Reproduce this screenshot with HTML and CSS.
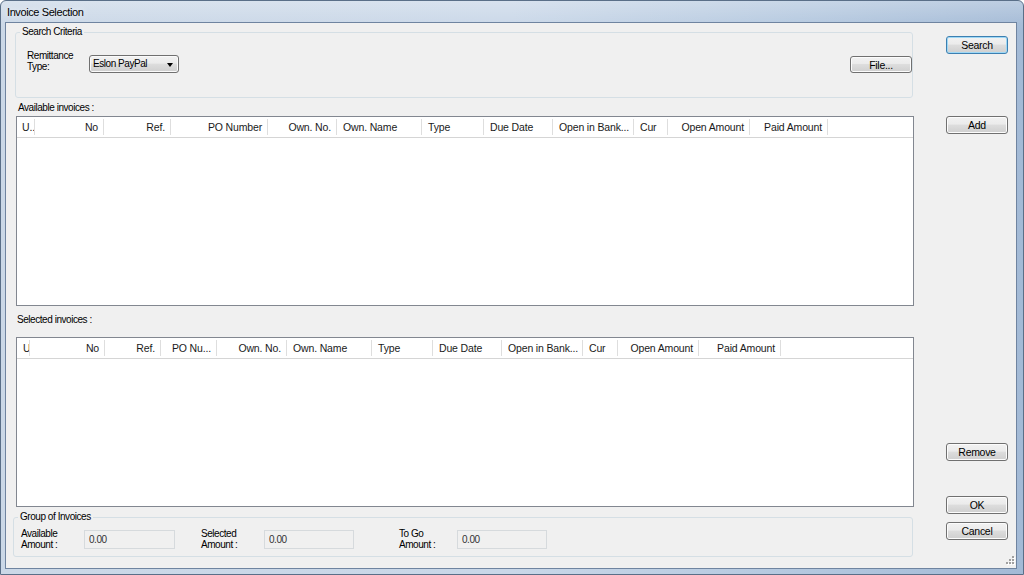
FILE: index.html
```html
<!DOCTYPE html>
<html>
<head>
<meta charset="utf-8">
<title>Invoice Selection</title>
<link rel="stylesheet" href="styles.css">
</head>
<body>
<div class="window">
  <div class="titlebar"><span class="title">Invoice Selection</span></div>
  <div class="client">
    <div class="main">
      <fieldset class="group group-search">
        <legend>Search Criteria</legend>
        <div class="search-row">
          <div class="lbl2">Remittance<br>Type:</div>
          <div class="combo"><span class="combo-text">Eslon PayPal</span><span class="arrow"></span></div>
          <button class="btn btn-file">File...</button>
        </div>
      </fieldset>

      <div class="caption cap-avail">Available invoices :</div>
      <div class="list list-avail">
        <div class="hdr hdr-avail">
          <div class="hc">U..</div>
          <div class="hc r">No</div>
          <div class="hc r">Ref.</div>
          <div class="hc r">PO Number</div>
          <div class="hc r">Own. No.</div>
          <div class="hc">Own. Name</div>
          <div class="hc">Type</div>
          <div class="hc">Due Date</div>
          <div class="hc">Open in Bank...</div>
          <div class="hc">Cur</div>
          <div class="hc r">Open Amount</div>
          <div class="hc r">Paid Amount</div>
          <div class="hc fill"></div>
        </div>
      </div>

      <div class="caption cap-sel">Selected invoices :</div>
      <div class="list list-sel">
        <div class="hdr hdr-sel">
          <div class="hc">U</div>
          <div class="hc r">No</div>
          <div class="hc r">Ref.</div>
          <div class="hc r">PO Nu...</div>
          <div class="hc r">Own. No.</div>
          <div class="hc">Own. Name</div>
          <div class="hc">Type</div>
          <div class="hc">Due Date</div>
          <div class="hc">Open in Bank...</div>
          <div class="hc">Cur</div>
          <div class="hc r">Open Amount</div>
          <div class="hc r">Paid Amount</div>
          <div class="hc fill"></div>
        </div>
      </div>

      <fieldset class="group group-totals">
        <legend>Group of Invoices</legend>
        <div class="totals-row">
          <div class="tlbl tl1">Available<br>Amount :</div>
          <div class="field f1">0.00</div>
          <div class="tlbl tl2">Selected<br>Amount :</div>
          <div class="field f2">0.00</div>
          <div class="tlbl tl3">To Go<br>Amount :</div>
          <div class="field f3">0.00</div>
        </div>
      </fieldset>
    </div>

    <div class="side">
      <button class="btn btn-default b-search">Search</button>
      <button class="btn b-add">Add</button>
      <button class="btn b-remove">Remove</button>
      <button class="btn b-ok">OK</button>
      <button class="btn b-cancel">Cancel</button>
    </div>

    <svg class="grip" width="12" height="12" viewBox="0 0 12 12">
      <g fill="#fff">
        <rect x="10" y="2" width="2" height="2"/>
        <rect x="7" y="5" width="2" height="2"/><rect x="10" y="5" width="2" height="2"/>
        <rect x="4" y="8" width="2" height="2"/><rect x="7" y="8" width="2" height="2"/><rect x="10" y="8" width="2" height="2"/>
      </g>
      <g fill="#a0a0a0">
        <rect x="9" y="1" width="2" height="2"/>
        <rect x="6" y="4" width="2" height="2"/><rect x="9" y="4" width="2" height="2"/>
        <rect x="3" y="7" width="2" height="2"/><rect x="6" y="7" width="2" height="2"/><rect x="9" y="7" width="2" height="2"/>
      </g>
    </svg>
  </div>
</div>
</body>
</html>
```

FILE: styles.css
```css
html, body {
  margin: 0;
  padding: 0;
  background: #ffffff;
}

body {
  font-family: "Liberation Sans", Arial, sans-serif;
  font-size: 10px;
  letter-spacing: -0.45px;
  color: #000;
}

.window {
  width: 1024px;
  height: 575px;
  box-sizing: border-box;
  border: 1px solid #5a6f88;
  border-radius: 6px 6px 0 0;
  overflow: hidden;
  display: flex;
  flex-direction: column;
  background:
    linear-gradient(to bottom, rgba(255,255,255,0.28), rgba(255,255,255,0.05) 22px, rgba(255,255,255,0) 30px),
    linear-gradient(to right, #cbd8e7 0%, #c9d7e8 50%, #b4c8df 78%, #a3bad6 100%);
}

.titlebar {
  height: 21px;
  flex: none;
  display: flex;
  align-items: center;
  padding-left: 6px;
}

.title {
  font-size: 11px;
  letter-spacing: -0.4px;
  color: #000;
  margin-top: 1px;
  text-shadow: 0 0 6px rgba(255,255,255,0.9);
}

.client {
  position: relative;
  flex: none;
  height: 547px;
  margin: 0 6px 0 4px;
  box-sizing: border-box;
  border: 1px solid #6f84a0;
  background: #f0f0f0;
  display: flex;
}

.main {
  width: 908px;
  flex: none;
  display: flex;
  flex-direction: column;
}

/* Group boxes */
fieldset.group {
  margin: 0;
  padding: 0;
  min-width: 0;
  border: 1px solid #d5dfe5;
  border-radius: 3px;
  box-sizing: border-box;
}

fieldset.group legend {
  padding: 0 2px;
  margin-left: 4px;
  line-height: 12px;
  font-size: 10px;
}

.group-search {
  margin: 3px 0 0 9px !important;
  width: 898px;
}

.search-row {
  display: flex;
  align-items: flex-start;
  height: 18px;
  padding: 17px 0 24px 11px;
}

.lbl2 {
  width: 62px;
  line-height: 11px;
  margin-top: -5px;
}

.combo {
  width: 90px;
  height: 18px;
  box-sizing: border-box;
  border: 1px solid #707070;
  border-radius: 3px;
  background: linear-gradient(#f2f2f2 0%, #ebebeb 45%, #dddddd 50%, #cfcfcf 100%);
  box-shadow: inset 0 0 0 1px #fafafa;
  display: flex;
  align-items: center;
  padding-left: 3px;
}

.combo-text {
  flex: 1;
  line-height: 16px;
}

.arrow {
  width: 0;
  height: 0;
  border-left: 3.5px solid transparent;
  border-right: 3.5px solid transparent;
  border-top: 4px solid #000;
  margin-right: 5px;
  margin-top: 1px;
}

/* Buttons */
.btn {
  font: inherit;
  letter-spacing: -0.3px;
  width: 62px;
  height: 18px;
  box-sizing: border-box;
  padding: 0;
  border: 1px solid #707070;
  border-radius: 3px;
  background: linear-gradient(#f2f2f2 0%, #ebebeb 45%, #dddddd 50%, #cfcfcf 100%);
  box-shadow: inset 0 0 0 1px #fcfcfc;
  color: #000;
  text-align: center;
  line-height: 16px;
  font-size: 10.5px;
}

.btn-default {
  border-color: #3c7fb1;
  box-shadow: inset 0 0 0 1px #9fd8f5;
}

.btn-file {
  margin-left: auto;
  margin-top: 1px;
  height: 17px;
}

/* Captions */
.caption {
  line-height: 12px;
}

.cap-avail {
  margin: 4px 0 0 12px;
}

.cap-sel {
  margin: 8px 0 0 11px;
}

/* Lists */
.list {
  margin-left: 10px;
  width: 898px;
  box-sizing: border-box;
  border: 1px solid #828790;
  background: #ffffff;
}

.list-avail {
  margin-top: 2px;
  height: 190px;
}

.list-sel {
  margin-top: 11px;
  height: 170px;
}

.hdr {
  display: grid;
  height: 20px;
  border-bottom: 1px solid #d5d5d5;
  background: #ffffff;
  font-size: 10.5px;
  letter-spacing: -0.15px;
  color: #1a1a1a;
}

.hdr-avail {
  grid-template-columns: 18px 69px 67px 97px 69px 85px 62px 69px 81px 34px 82px 78px 1fr;
}

.hdr-sel {
  grid-template-columns: 13px 75px 56px 56px 70px 85px 61px 69px 81px 35px 81px 82px 1fr;
}

.hc {
  position: relative;
  padding: 0 6px;
  line-height: 20px;
  white-space: nowrap;
  overflow: hidden;
}

.hc.r {
  text-align: right;
}

.hdr-sel .hc:first-child {
  padding: 0 0 0 6px;
}

.hdr-avail .hc:first-child {
  padding: 0 0 0 5px;
}

.hc::after {
  content: "";
  position: absolute;
  right: 0;
  top: 2px;
  bottom: 2px;
  width: 1px;
  background: #dedede;
}

.hc.fill::after {
  display: none;
}

/* Totals */
.group-totals {
  margin: 4px 0 0 7px !important;
  width: 900px;
}

.totals-row {
  display: flex;
  align-items: center;
  padding: 5px 0 6px 7px;
}

.tlbl {
  line-height: 11px;
}

.tl1 { width: 63px; }
.tl2 { width: 63px; }
.tl3 { width: 58px; }

.field {
  height: 19px;
  box-sizing: border-box;
  border: 1px solid #d6dadd;
  background: #f0f0f0;
  padding-left: 4px;
  line-height: 17px;
  color: #333;
}

.f1 { width: 91px; margin-right: 26px; }
.f2 { width: 90px; margin-right: 45px; }
.f3 { width: 90px; }

/* Side buttons */
.side {
  display: flex;
  flex-direction: column;
  margin-left: 32px;
  width: 62px;
}

.b-search { margin-top: 13px; }
.b-add { margin-top: 62px; }
.b-remove { margin-top: 309px; }
.b-ok { margin-top: 35px; }
.b-cancel { margin-top: 8px; }

.grip {
  position: absolute;
  right: 1px;
  bottom: 1px;
}
```
